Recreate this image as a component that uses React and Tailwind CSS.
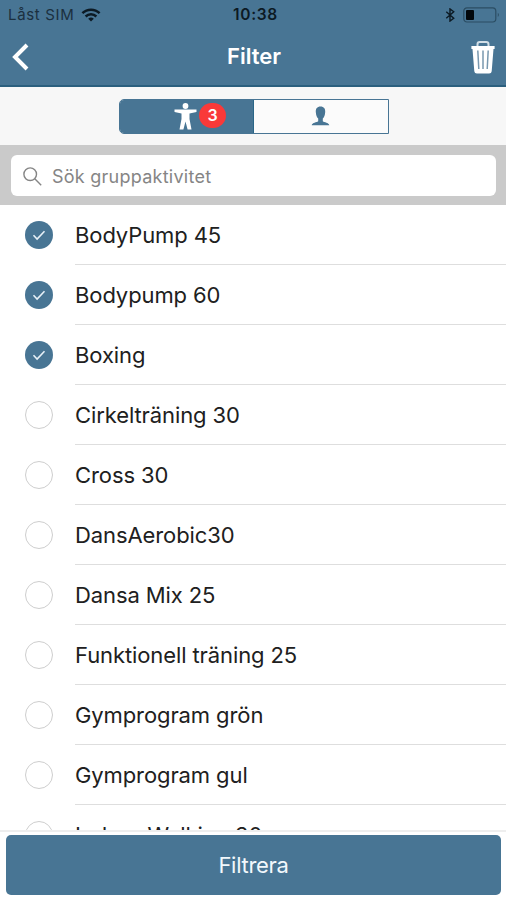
const activities = [
  { name: 'BodyPump 45', checked: true },
  { name: 'Bodypump 60', checked: true },
  { name: 'Boxing', checked: true },
  { name: 'Cirkelträning 30' },
  { name: 'Cross 30' },
  { name: 'DansAerobic30' },
  { name: 'Dansa Mix 25' },
  { name: 'Funktionell träning 25' },
  { name: 'Gymprogram grön' },
  { name: 'Gymprogram gul' },
  { name: 'Indoor Walking 30' },
];

function StatusBar() {
  return (
    <div className="grid h-7 grid-cols-[1fr_auto_1fr] items-center pl-2 pr-[6px] pt-px text-[#0c1a24]">
      <div className="flex items-center gap-[7px]">
        <span className="text-[15px] leading-7 tracking-[0.65px] text-[#1b303f]">Låst SIM</span>
        <svg className="-mt-px" width="20" height="14" viewBox="0 0 20 14" fill="none" stroke="currentColor" strokeWidth="2.5">
          <path d="M1.4 5.1a12.4 12.4 0 0 1 17.2 0" />
          <path d="M4.6 8.5a7.8 7.8 0 0 1 10.8 0" />
          <path d="M10 13.5 7.2 10.7a4.1 4.1 0 0 1 5.6 0Z" fill="currentColor" stroke="none" />
        </svg>
      </div>
      <span className="pl-[3px] text-[15.5px] font-semibold leading-7 tracking-[0.7px]">10:38</span>
      <div className="flex items-center justify-end gap-2">
        <svg width="10" height="14" viewBox="0 0 10 15" fill="none" stroke="currentColor" strokeWidth="1.5">
          <path d="m1 4 8 7-4 3V1l4 3-8 7" />
        </svg>
        <svg className="-mt-px" width="37" height="16" viewBox="0 0 37 16" fill="none">
          <rect x="0.8" y="0.8" width="32" height="14.2" rx="3.2" stroke="#2b4d63" strokeWidth="1.2" />
          <rect x="3" y="3" width="8" height="10" rx="1" fill="#02070b" />
          <path d="M34.8 5.8q2.2 2.1 0 4.2Z" fill="#2b4d63" />
        </svg>
      </div>
    </div>
  );
}

function NavBar() {
  return (
    <div className="grid h-[59px] grid-cols-[1fr_auto_1fr] items-center border-b-2 border-[#2b5f7e] pl-3 pr-[10px] text-white">
      <svg className="mt-px" width="18" height="28" viewBox="0 0 18 28" fill="none" stroke="currentColor" strokeWidth="4">
        <path d="M15 2 3 14l12 12" />
      </svg>
      <h1 className="-mt-px text-[22px] font-semibold leading-8">Filter</h1>
      <svg className="mt-px justify-self-end" width="26" height="34" viewBox="0 0 26 34">
        <path d="M7.5 6V4.200Q7.500 2 9.800 2h6.400q2.300 0 2.300 2.200V6" fill="none" stroke="#d3dfe7" strokeWidth="2" />
        <path d="M1.4 6h23.2v3h-1.1l-1.8 22.200q-.2 2.200-2.6 2.200H6.9q-2.4 0-2.6-2.200L2.500 9H1.400Z" fill="white" />
        <path d="m7.800 10.500 1 18.500M13 10.500v18.500M18.200 10.500l-1 18.500" stroke="#7898af" strokeWidth="1.500" />
      </svg>
    </div>
  );
}

function Tabs() {
  return (
    <div className="flex h-[58px] justify-center bg-[#f7f7f7] pl-[2px] pt-3">
      <div className="flex h-[35px] w-[270px] overflow-hidden rounded-l-[5px] border border-[#487594]">
        <div className="flex w-[134px] items-center border-r border-[#2b6687] bg-[#487594] pl-[54px]">
          <svg width="23" height="27" viewBox="0 0 23 27" fill="white">
            <circle cx="11.500" cy="3" r="2.900" />
            <path d="M.5 6.500h22v2.600L15.500 10.500V16l2 10.500H13.600L11.500 18.500 9.400 26.500H5.500L7.500 16v-5.500L.5 9.100Z" />
          </svg>
          <span className="mb-[3px] ml-[2px] flex h-[25px] w-[27px] items-center justify-center rounded-full bg-[#f93939] text-[16px] font-semibold text-white">3</span>
        </div>
        <div className="flex flex-1 items-center justify-center bg-[#fbfbfb] pr-[2px]">
          <svg className="-mt-px" width="19" height="20" viewBox="0 0 19 20" fill="#487594">
            <path d="M9.500.5c3.300 0 5 2.200 4.700 5.600-.2 3.200-1 5.200-2.400 6.500v2.600c1.500 1.200 6 1.300 6.500 4H.7c.5-2.700 5-2.800 6.500-4v-2.600C5.800 11.300 5 9.300 4.800 6.100 4.500 2.700 6.200.5 9.500.5Z" />
          </svg>
        </div>
      </div>
    </div>
  );
}

function SearchField() {
  return (
    <div className="h-[60px] bg-[#cacaca] pl-[11px] pr-[10px] pt-[10px]">
      <div className="flex h-[41px] items-center rounded-[6px] bg-white pl-3 text-[#858585]">
        <svg className="mt-[2px]" width="19" height="19" viewBox="0 0 19 19" fill="none" stroke="currentColor" strokeWidth="1.400">
          <circle cx="7.200" cy="7.200" r="6.300" />
          <path d="m11.800 11.800 6.400 6.400" />
        </svg>
        <span className="ml-[10px] mt-[2px] text-[18px] leading-6 tracking-[0.250px]">Sök gruppaktivitet</span>
      </div>
    </div>
  );
}

function ActivityRow({ name, checked }) {
  return (
    <li className="flex h-[60px] shrink-0 items-center pl-[25px]">
      {checked ? (
        <span className="flex size-7 items-center justify-center rounded-full bg-[#487594]">
          <svg width="14" height="12" viewBox="0 0 14 12" fill="none" stroke="#e6f0f7" strokeWidth="1.600">
            <path d="m1.500 6.200 3.600 3.800L12.500 2.200" />
          </svg>
        </span>
      ) : (
        <span className="size-7 rounded-full border-[1.500px] border-[#cecece]" />
      )}
      <span className="ml-[22px] flex h-full flex-1 items-center border-b border-[#dedede] pt-[2px] text-[22px] tracking-[-0.100px] text-[#202020]">
        {name}
      </span>
    </li>
  );
}

export default function App() {
  return (
    <div className="flex h-[900px] w-[506px] flex-col overflow-hidden bg-white font-['Inter','Liberation_Sans',sans-serif]">
      <header className="bg-[#487594]">
        <StatusBar />
        <NavBar />
      </header>
      <Tabs />
      <SearchField />
      <ul className="flex min-h-0 flex-1 flex-col overflow-hidden">
        {activities.map((activity) => (
          <ActivityRow key={activity.name} {...activity} />
        ))}
      </ul>
      <footer className="h-[70px] border-t-2 border-[#eeeeee] pl-[6px] pr-[5px] pt-[3px]">
        <button className="h-[60px] w-full rounded-[5px] bg-[#487594] text-[22px] tracking-[-0.300px] text-[#f2f8fc]">
          Filtrera
        </button>
      </footer>
    </div>
  );
}
